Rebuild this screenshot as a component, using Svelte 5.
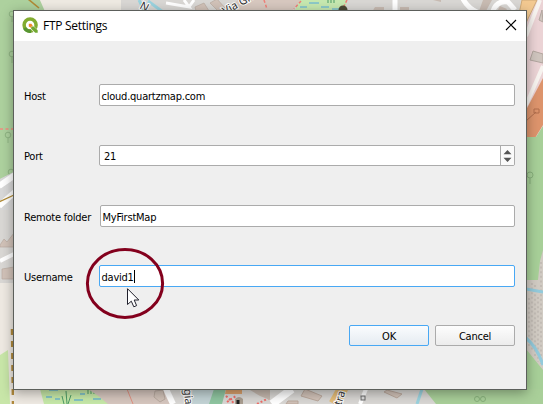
<script>
  let host = $state('cloud.quartzmap.com');
  let port = $state('21');
  let folder = $state('MyFirstMap');
  let username = $state('david1');
</script>

<div class="screen">
  <svg class="map" width="543" height="404" viewBox="0 0 543 404" aria-hidden="true">
    <rect width="543" height="404" fill="#d9d7d4" />
    <!-- left edge -->
    <path d="M0 0H40L48 14V120L0 142Z" fill="#add19e" />
    <path d="M0 120H14V172L0 179Z" fill="#add19e" />
    <path d="M40 0H121V14H46Z" fill="#eeeae2" />
    <path d="M28 -1L39 8" stroke="#b08a35" stroke-width="1.6" />
    <g fill="none" stroke="#8fb583" stroke-width="1">
      <circle cx="12" cy="14" r="2.8" /><path d="M12 17V22" />
      <circle cx="12" cy="54" r="2.8" /><path d="M12 57V63" />
      <circle cx="8" cy="135" r="2.8" /><path d="M8 138V143" />
      <circle cx="11" cy="172" r="2.8" />
    </g>
    <path d="M0 129H14" stroke="#ef8d80" stroke-width="1.5" stroke-dasharray="3 2.5" />
    <path d="M0 179L14 172V210H0Z" fill="#d8d8d8" />
    <path d="M-1 186L15 175M-1 206L15 192" stroke="#fff" stroke-width="6" />
    <path d="M-1 202L14 195" stroke="#b08a35" stroke-width="1.2" />
    <path d="M0 245L4 239L7 242L14 233V247H0ZM2 269L14 267V279H2Z" fill="#d1c2b8" stroke="#b9aaa0" stroke-width=".7" />
    <path d="M0 261L14 254" stroke="#fff" stroke-width="4" />
    <path d="M0 283H14V404H0Z" fill="#eee9e2" />
    <path d="M0 355L8 350L10 404H0Z" fill="#c8e6a8" />
    <path d="M12 329L13 404" stroke="#b18a3c" stroke-width="2.5" stroke-dasharray="6 6" />
    <!-- top edge -->
    <path d="M139 0L145 12M148 1L163 12" stroke="#9bd3df" stroke-width="3" />
    <path d="M166 3L189 7L184 0M189 7L194 0" stroke="#fff" stroke-width="3" fill="none" />
    <path d="M195 7L204 3L209 11H196ZM210 3L217 -1L225 8L218 11Z" fill="#d1c2b8" stroke="#b9aaa0" stroke-width=".7" />
    <path d="M238 0H302L292 11H225Z" fill="#d7c8bf" />
    <path d="M300 0H347L345 12H294Z" fill="#c6e8b0" />
    <path d="M309 3H319M300 7H307M321 7H329M332 9H339" stroke="#55aadd" stroke-width="1.2" />
    <path d="M328 0V3M331 0V3M334 0V3" stroke="#4d9b66" />
    <path d="M264 0L267 9M301 1L294 9M347 0L343 8" stroke="#ef7f78" stroke-width="1.5" stroke-dasharray="3 2" />
    <circle cx="343" cy="10" r="4.5" fill="#4c4934" />
    <path d="M395 0V12M463 -1Q468 8 477 12M493 11Q497 0 508 2L515 10" stroke="#fff" stroke-width="5" fill="none" />
    <path d="M375 7H384V12H372ZM400 7H409V12H400ZM483 0H492L486 11H479ZM500 6L507 9L505 12H497ZM433 0H441V2Z" fill="#c8bbb2" />
    <text x="225" y="15" transform="rotate(-29 225 15)" class="street">Via Gra</text>
    <text x="139" y="8" transform="rotate(28 139 8)" class="street">N</text>
    <!-- right edge -->
    <path d="M527 0H543V140H526Z" fill="#ebd3d5" />
    <path d="M522 0H537L525 25L519 14Z" fill="#f3c991" stroke="#cfaa78" />
    <path d="M540 0L526 36M543 66L526 105" stroke="#f7f3ef" stroke-width="4" />
    <path d="M533 51L543 54V63L530 60ZM542 10L539 20L543 22Z" fill="#cfc5be" stroke="#b2a69f" />
    <path d="M526 110L543 78V125L535 138H526Z" fill="#dd946c" />
    <path d="M526 121L536 112M534 109H539V113H534Z" fill="none" stroke="#b16e4d" />
    <path d="M526 137H536L543 126V404H526Z" fill="#a7cf98" />
    <g fill="none" stroke="#87b07b"><circle cx="530" cy="175" r="3" /><path d="M530 178V184" /></g>
    <path d="M526 280H538L540 261L543 250V370L526 349Z" fill="#d1cbc3" />
    <g stroke="#b9b3ac" stroke-width="1.2" stroke-dasharray="2 2.6">
      <path d="M529 298V347M532 283V352M535 285V358M538 297V362M541 262V364" />
    </g>
    <path d="M526 289L543 292M526 338Q537 347 543 365" stroke="#93cadb" stroke-width="3" fill="none" />
    <!-- bottom edge -->
    <path d="M14 389H46L44 404H14Z" fill="#eee9e2" />
    <path d="M40 389H98L108 402V404H44Z" fill="#c6e8a8" />
    <path d="M49 390H58M46 397H52M55 399H60M74 400H83M80 394H85M93 399H101" stroke="#45a0e0" stroke-width="1.2" />
    <path d="M67 404L66 391M64 404L62 396M68 404L71 395M88 390V394M91 390V394M94 390V394" stroke="#4d9b66" />
    <path d="M88 389H165L173 404H108Q98 395 88 389Z" fill="#d6c6be" />
    <path d="M127 389L133 404" stroke="#e09080" />
    <path d="M155 391L163 390L165 399L160 402L154 397Z" fill="#d1c2b8" stroke="#b9aaa0" />
    <path d="M166 389L173 404" stroke="#fff" stroke-width="6" />
    <path d="M193 389H215L210 404H191Z" fill="#c3d3d5" />
    <path d="M214 389H226L222 404H209Z" fill="#8fc5a0" />
    <path d="M226 389H242V394H225Z" fill="#dba16c" />
    <path d="M226 396L235 404M227 402L236 396M257 404L271 397" stroke="#ef6c67" stroke-width="2" stroke-dasharray="2 2" />
    <path d="M235 404V399Q239 395 243 399V404Z" fill="#a99d90" />
    <path d="M238 404V400" stroke="#222" stroke-width="3" />
    <path d="M250 390H270V400L260 396Z" fill="#c4b7ad" />
    <path d="M272 404L292 389" stroke="#fff" stroke-width="8" />
    <path d="M305 389L322 396L318 401L301 396ZM387 390L402 394L397 398L384 392ZM286 404L288 401H298V404Z" fill="#d1c2b8" stroke="#bba99d" />
    <path d="M334 404L344 386" stroke="#e4bd78" stroke-width="11" />
    <path d="M360 404L366 389" stroke="#fff" stroke-width="4" />
    <rect x="361" y="396" width="4" height="4" fill="#ddd" stroke="#666" />
    <path d="M424 389H543V404H436Z" fill="#a9cf99" />
    <path d="M417 404L422 389" stroke="#9bd3df" stroke-width="3" />
    <text x="184" y="389" transform="rotate(86 184 389)" class="street">gia</text>
    <text x="341" y="406" transform="rotate(-72 341 406)" class="street">tra</text>
    <g fill="none" stroke="#87b07b"><circle cx="477" cy="399" r="2.5" /><circle cx="483" cy="399" r="2.5" /></g>
  </svg>

  <section class="dialog">
    <header>
      <svg class="logo" width="17" height="17" viewBox="0 0 17 17" aria-hidden="true">
        <circle cx="8.1" cy="8" r="6" fill="none" stroke="#82ac30" stroke-width="3.5" />
        <path d="M2.5 11A6 6 0 0 0 9 14" fill="none" stroke="#589632" stroke-width="3.4" />
        <path d="M8.2 8.2H11L16.2 13.4V16.4H13L8.2 11.4Z" fill="#fff" />
        <path d="M9.2 9.4H11.7L15.7 13.3V15.8H13.2L9.2 11.8Z" fill="#71a832" />
        <path d="M6.8 6.8H9.4L11 9.3H9.3V11L6.8 9.4Z" fill="#ee8c28" />
      </svg>
      <h1>FTP Settings</h1>
      <button class="close" aria-label="Close">
        <svg width="12" height="12" viewBox="0 0 12 12"><path d="M1 1L11 11M11 1L1 11" stroke="#000" stroke-width="1.15" /></svg>
      </button>
    </header>

    <div class="form">
      <div class="row host"><span class="label">Host</span><div class="field">{host}</div></div>
      <div class="row port">
        <span class="label">Port</span>
        <div class="field spin">
          <span>{port}</span>
          <div class="steps">
            <svg width="9" height="12" viewBox="0 0 9 12"><path d="M.5 4.2L4.5 0L8.5 4.2ZM.5 7.8L4.5 12L8.5 7.8Z" fill="#555" /></svg>
          </div>
        </div>
      </div>
      <div class="row folder"><span class="label">Remote folder</span><div class="field">{folder}</div></div>
      <div class="row user"><span class="label">Username</span><div class="field focus">{username}<i class="caret"></i></div></div>
    </div>

    <footer>
      <button class="btn default">OK</button>
      <button class="btn cancel">Cancel</button>
    </footer>
  </section>

  <svg class="overlay" width="543" height="404" viewBox="0 0 543 404" aria-hidden="true">
    <ellipse cx="125" cy="283.4" rx="37.6" ry="34" fill="none" stroke="#83001d" stroke-width="3" />
    <path d="M127.5 288.7V304.5L131.3 301.2L133.8 306.8L136.6 305.6L134.2 300H138.8Z" fill="#fff" stroke="#20202c" />
  </svg>
</div>

<style>
  .screen { position: relative; width: 543px; height: 404px; overflow: hidden; padding: 10px 0 0 13px; box-sizing: border-box; }
  .map, .overlay { position: absolute; left: 0; top: 0; pointer-events: none; }
  .street { font: 11px "Noto Sans", sans-serif; fill: #333; stroke: #fff; stroke-width: 2px; paint-order: stroke; }
  .dialog {
    position: relative; box-sizing: border-box; width: 514px; height: 380px; background: #efefef;
    border: 1px solid #5c5f5b; box-shadow: 0 3px 11px rgba(0, 0, 0, .34);
    display: flex; flex-direction: column; color: #000;
    font: 11px/14px "DejaVu Sans Condensed", "DejaVu Sans", sans-serif; font-stretch: condensed;
    letter-spacing: -.23px;
  }
  header { height: 30px; background: #fff; display: flex; align-items: center; padding: 0 9px 0 8px; box-sizing: border-box; flex: none; }
  .logo { flex: none; margin-top: -1px; }
  h1 { margin: 0 auto 0 4px; font: 12px/16px "Open Sans", "Noto Sans", sans-serif; letter-spacing: -.28px; }
  .close { display: flex; padding: 0; border: 0; background: none; margin-top: -2px; }
  .form { padding: 43px 11px 0 10px; }
  .row { display: flex; align-items: center; height: 22px; }
  .host { margin-bottom: 39px; }
  .port { height: 21px; margin-bottom: 39px; }
  .folder { margin-bottom: 38px; }
  .label { width: 75px; flex: none; white-space: nowrap; padding-top: 4px; }
  .port .label { padding-top: 3px; }
  .folder .label { width: 76px; }
  .field { position: relative; flex: 1; height: 100%; box-sizing: border-box; background: #fff; border: 1px solid #ababab; border-radius: 2px; padding: 5px 0 0 1.5px; display: flex; }
  .focus { border-color: #48a8f4; }
  .caret { width: 1px; height: 13px; margin-top: -1px; background: #000; }
  .spin { padding: 0; }
  .spin span { flex: 1; padding: 4px 0 0 4px; }
  .steps { width: 13px; border-left: 1px solid #ababab; background: #fafafa; display: flex; align-items: center; justify-content: center; border-radius: 0 1px 1px 0; }
  footer { display: flex; justify-content: flex-end; gap: 6px; padding: 38px 11px 0 0; }
  .btn { width: 80px; height: 21px; padding: 2px 0 0; border: 1px solid #ababab; border-radius: 2px; background: linear-gradient(#fdfdfd, #ececec); font: inherit; letter-spacing: inherit; color: #000; }
  .default { border-color: #48a8f4; background: linear-gradient(#fafcfe, #e5ebf1); }
</style>
